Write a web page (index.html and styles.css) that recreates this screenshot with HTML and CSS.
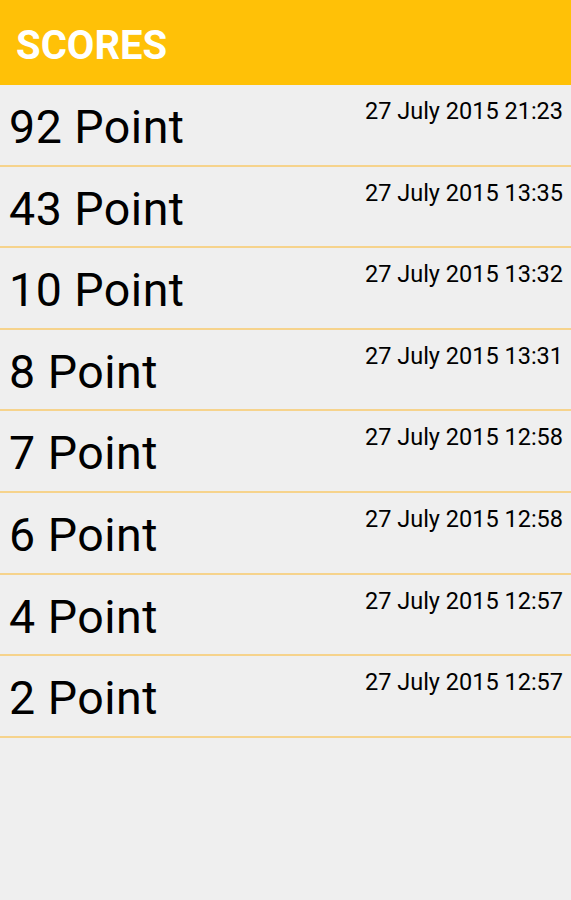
FILE: index.html
```html
<!DOCTYPE html>
<html>
<head>
<meta charset="utf-8">
<link rel="stylesheet" href="styles.css">
</head>
<body>
<header class="bar"><h1 class="title">SCORES</h1></header>
<ul class="list">
  <li class="row"><span class="pts">92 Point</span><span class="date">27 July 2015 21:23</span></li>
  <li class="row"><span class="pts">43 Point</span><span class="date">27 July 2015 13:35</span></li>
  <li class="row"><span class="pts">10 Point</span><span class="date">27 July 2015 13:32</span></li>
  <li class="row"><span class="pts">8 Point</span><span class="date">27 July 2015 13:31</span></li>
  <li class="row"><span class="pts">7 Point</span><span class="date">27 July 2015 12:58</span></li>
  <li class="row"><span class="pts">6 Point</span><span class="date">27 July 2015 12:58</span></li>
  <li class="row"><span class="pts">4 Point</span><span class="date">27 July 2015 12:57</span></li>
  <li class="row"><span class="pts">2 Point</span><span class="date">27 July 2015 12:57</span></li>
</ul>
</body>
</html>
```
FILE: styles.css
```css
html, body {
  margin: 0;
  padding: 0;
  background: #efefef;
  font-family: Roboto, "Liberation Sans", sans-serif;
  color: #000;
}
.bar {
  height: 85px;
  background: #ffc107;
  display: flex;
  align-items: center;
  padding-left: 16px;
  box-sizing: border-box;
}
.title {
  margin: 0;
  font-size: 40px;
  font-weight: 700;
  color: #fff;
  line-height: 1;
  padding-top: 7px;
}
.list {
  list-style: none;
  margin: 0;
  padding: 0;
}
.row {
  height: 79.6px;
  border-bottom: 2px solid #f6d38c;
  display: flex;
  justify-content: space-between;
  align-items: flex-start;
  padding: 0 8px 0 9px;
}
.pts {
  font-size: 46.5px;
  letter-spacing: 0.5px;
  line-height: 54px;
  padding-top: 15px;
}
.date {
  font-size: 23.5px;
  line-height: 28px;
  padding-top: 12px;
}
```
